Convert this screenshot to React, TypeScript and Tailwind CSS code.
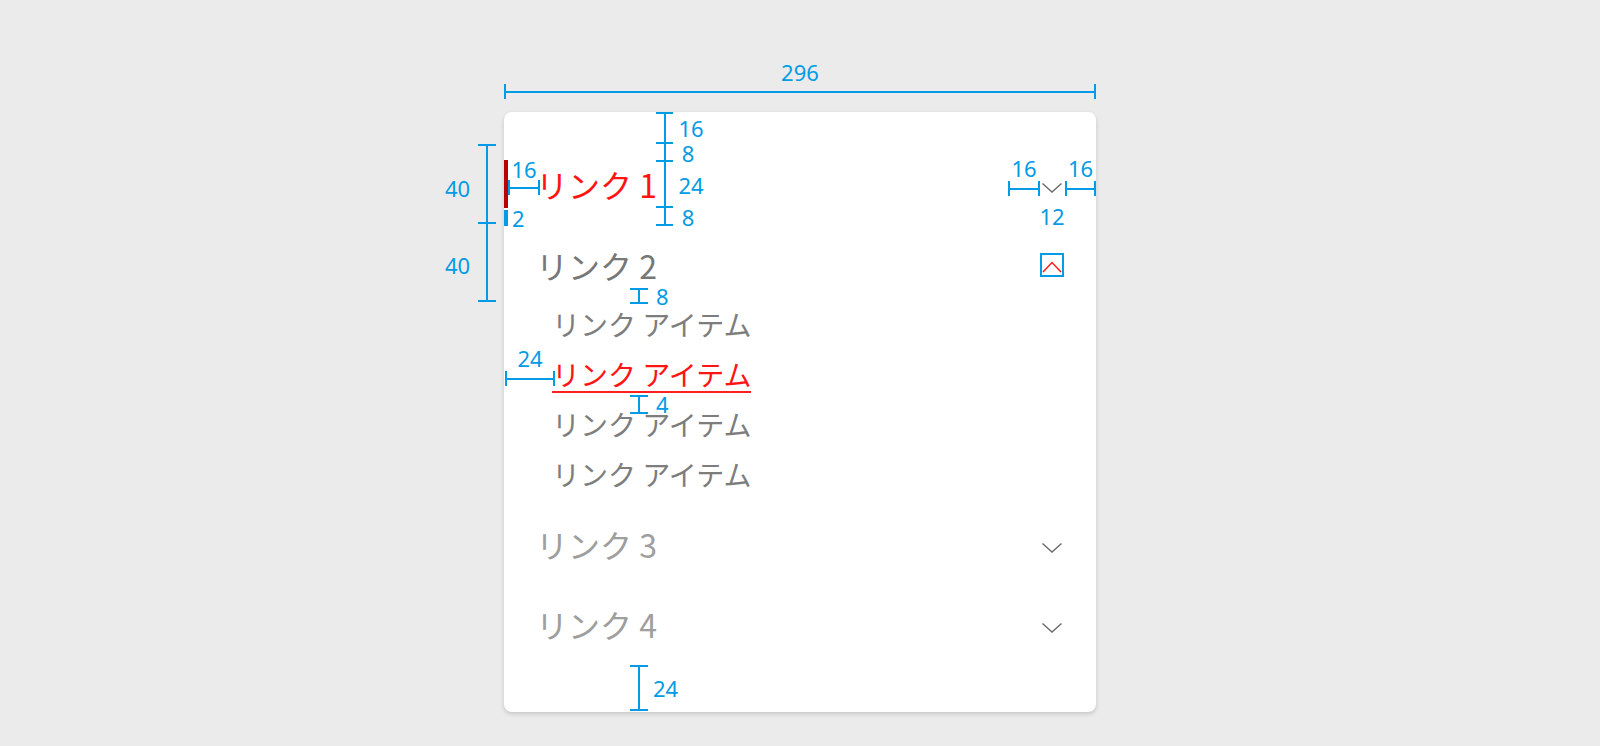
import type { ReactNode } from "react"

// spec annotation colour
const ink = "bg-[#039be5]"

function Label({ className = "", children }: { className?: string; children: ReactNode }) {
  return (
    <span
      className={`block whitespace-nowrap font-['Noto_Sans','Open_Sans',sans-serif] text-[22px] leading-none text-[#039be5] ${className}`}
    >
      {children}
    </span>
  )
}

// horizontal dimension line |-----|
function HRule() {
  return (
    <div className="flex h-[15px] w-full items-center">
      <span className={`h-full w-[2px] ${ink}`} />
      <span className={`h-[2px] flex-1 ${ink}`} />
      <span className={`h-full w-[2px] ${ink}`} />
    </div>
  )
}

// vertical dimension line, one tick between every segment
function VRule({ segments, className = "w-[18px]" }: { segments: string[]; className?: string }) {
  return (
    <div className={`flex flex-col items-center ${className}`}>
      <span className={`h-[2px] w-full ${ink}`} />
      {segments.map((h, i) => (
        <div key={i} className="flex w-full flex-col items-center">
          <span className={`w-[2px] ${h} ${ink}`} />
          <span className={`h-[2px] w-full ${ink}`} />
        </div>
      ))}
    </div>
  )
}

function ChevronDown() {
  return (
    <svg width="24" height="24" viewBox="0 0 24 24" fill="none">
      <polyline points="2.5,11.5 12,20 21.5,11.5" stroke="#6e6e6e" strokeWidth="1.5" />
    </svg>
  )
}

function ChevronUp() {
  return (
    <svg width="24" height="24" viewBox="0 0 24 24" fill="none">
      <polyline points="3,19 12,9.5 21,19" stroke="#ff1a1a" strokeWidth="1.5" />
    </svg>
  )
}

const items = [
  { label: "リンク アイテム", active: false },
  { label: "リンク アイテム", active: true },
  { label: "リンク アイテム", active: false },
  { label: "リンク アイテム", active: false },
]

function SideNav() {
  return (
    <nav className="flex w-[592px] flex-col rounded-lg bg-white pt-[32px] pb-[48px] font-['Noto_Sans_CJK_JP','Noto_Sans',sans-serif] shadow-[0_2px_4px_rgba(0,0,0,0.16)]">
      {/* リンク 1 (current) */}
      <div className="flex h-[80px] items-center pr-[32px]">
        <span className="h-[48px] w-[4px] bg-[#b80000]" />
        <span className="ml-[28px] flex-1 text-[32px] leading-none text-[#ff1414]">リンク 1</span>
        <ChevronDown />
      </div>

      {/* リンク 2 (open) */}
      <div className="flex h-[76px] items-center px-[32px] pt-[6px]">
        <span className="flex-1 text-[32px] leading-none text-[#777777]">リンク 2</span>
        <ChevronUp />
      </div>
      <ul className="flex flex-col">
        {items.map((it, i) => (
          <li key={i} className="flex h-[50px] items-center pl-[48px]">
            <span
              className={`inline-block border-b-2 text-[28px] leading-[33px] ${
                it.active ? "border-[#ff2020] text-[#ff1414]" : "border-transparent text-[#7d7d7d]"
              }`}
            >
              {it.label}
            </span>
          </li>
        ))}
      </ul>

      <div className="mt-[4px] flex h-[80px] items-center px-[32px]">
        <span className="flex-1 text-[32px] leading-none text-[#9e9e9e]">リンク 3</span>
        <ChevronDown />
      </div>
      <div className="flex h-[80px] items-center px-[32px]">
        <span className="flex-1 text-[32px] leading-none text-[#9e9e9e]">リンク 4</span>
        <ChevronDown />
      </div>
    </nav>
  )
}

// redline annotations drawn over the component
function Annotations() {
  return (
    <>
      {/* 296 */}
      <div className="absolute left-[504px] top-[61px] flex w-[592px] flex-col items-center">
        <Label>296</Label>
        <div className="mt-[1px] w-full">
          <HRule />
        </div>
      </div>

      {/* 16 / 8 / 24 / 8 */}
      <div className="absolute left-[656px] top-[112px] flex">
        <VRule className="w-[17px]" segments={["h-[28px]", "h-[16px]", "h-[44px]", "h-[16px]"]} />
        <div className="ml-[5px] flex w-[26px] flex-col">
          <div className="flex h-[32px] items-center justify-center"><Label>16</Label></div>
          <div className="flex h-[18px] items-center justify-center pr-[6px]"><Label>8</Label></div>
          <div className="flex h-[46px] items-center justify-center"><Label>24</Label></div>
          <div className="flex h-[18px] items-center justify-center pr-[6px]"><Label>8</Label></div>
        </div>
      </div>

      {/* 40 / 40 */}
      <div className="absolute left-[445px] top-[144px] flex gap-[8px]">
        <div className="flex w-[25px] flex-col items-center gap-[55px] pt-[33px]">
          <Label>40</Label>
          <Label>40</Label>
        </div>
        <VRule segments={["h-[76px]", "h-[76px]"]} />
      </div>

      {/* 16 text inset */}
      <div className="absolute left-[508px] top-[158px] flex w-[32px] flex-col items-center">
        <Label>16</Label>
        <HRule />
      </div>

      {/* 2 bar width */}
      <div className="absolute left-[504px] top-[207px] flex items-center gap-[4px]">
        <span className={`h-[16px] w-[4px] ${ink}`} />
        <Label>2</Label>
      </div>

      {/* 16 | icon | 16 */}
      <div className="absolute left-[1008px] top-[157px] flex gap-[25px]">
        <div className="flex w-[32px] flex-col items-center gap-[2px]">
          <Label>16</Label>
          <HRule />
        </div>
        <div className="flex w-[31px] flex-col items-center gap-[2px]">
          <Label>16</Label>
          <HRule />
        </div>
      </div>
      <div className="absolute left-[1039px] top-[205px] flex w-[26px] justify-center">
        <Label>12</Label>
      </div>

      {/* highlighted icon */}
      <div className="absolute left-[1040px] top-[253px] h-[24px] w-[24px] border-2 border-[#039be5]" />

      {/* 8 */}
      <div className="absolute left-[630px] top-[285px] flex items-center gap-[8px]">
        <VRule segments={["h-[12px]"]} />
        <Label>8</Label>
      </div>

      {/* 24 item inset */}
      <div className="absolute left-[505px] top-[347px] flex w-[50px] flex-col items-center gap-[2px]">
        <Label>24</Label>
        <HRule />
      </div>

      {/* 4 */}
      <div className="absolute left-[630px] top-[393px] flex items-center gap-[8px]">
        <VRule segments={["h-[15px]"]} />
        <Label>4</Label>
      </div>

      {/* 24 bottom */}
      <div className="absolute left-[630px] top-[665px] flex items-center gap-[5px]">
        <VRule segments={["h-[42px]"]} />
        <Label>24</Label>
      </div>
    </>
  )
}

export default function App() {
  return (
    <div className="relative h-[746px] w-full overflow-hidden bg-[#ebebeb]">
      <div className="flex justify-center pt-[112px]">
        <SideNav />
      </div>
      <Annotations />
    </div>
  )
}
